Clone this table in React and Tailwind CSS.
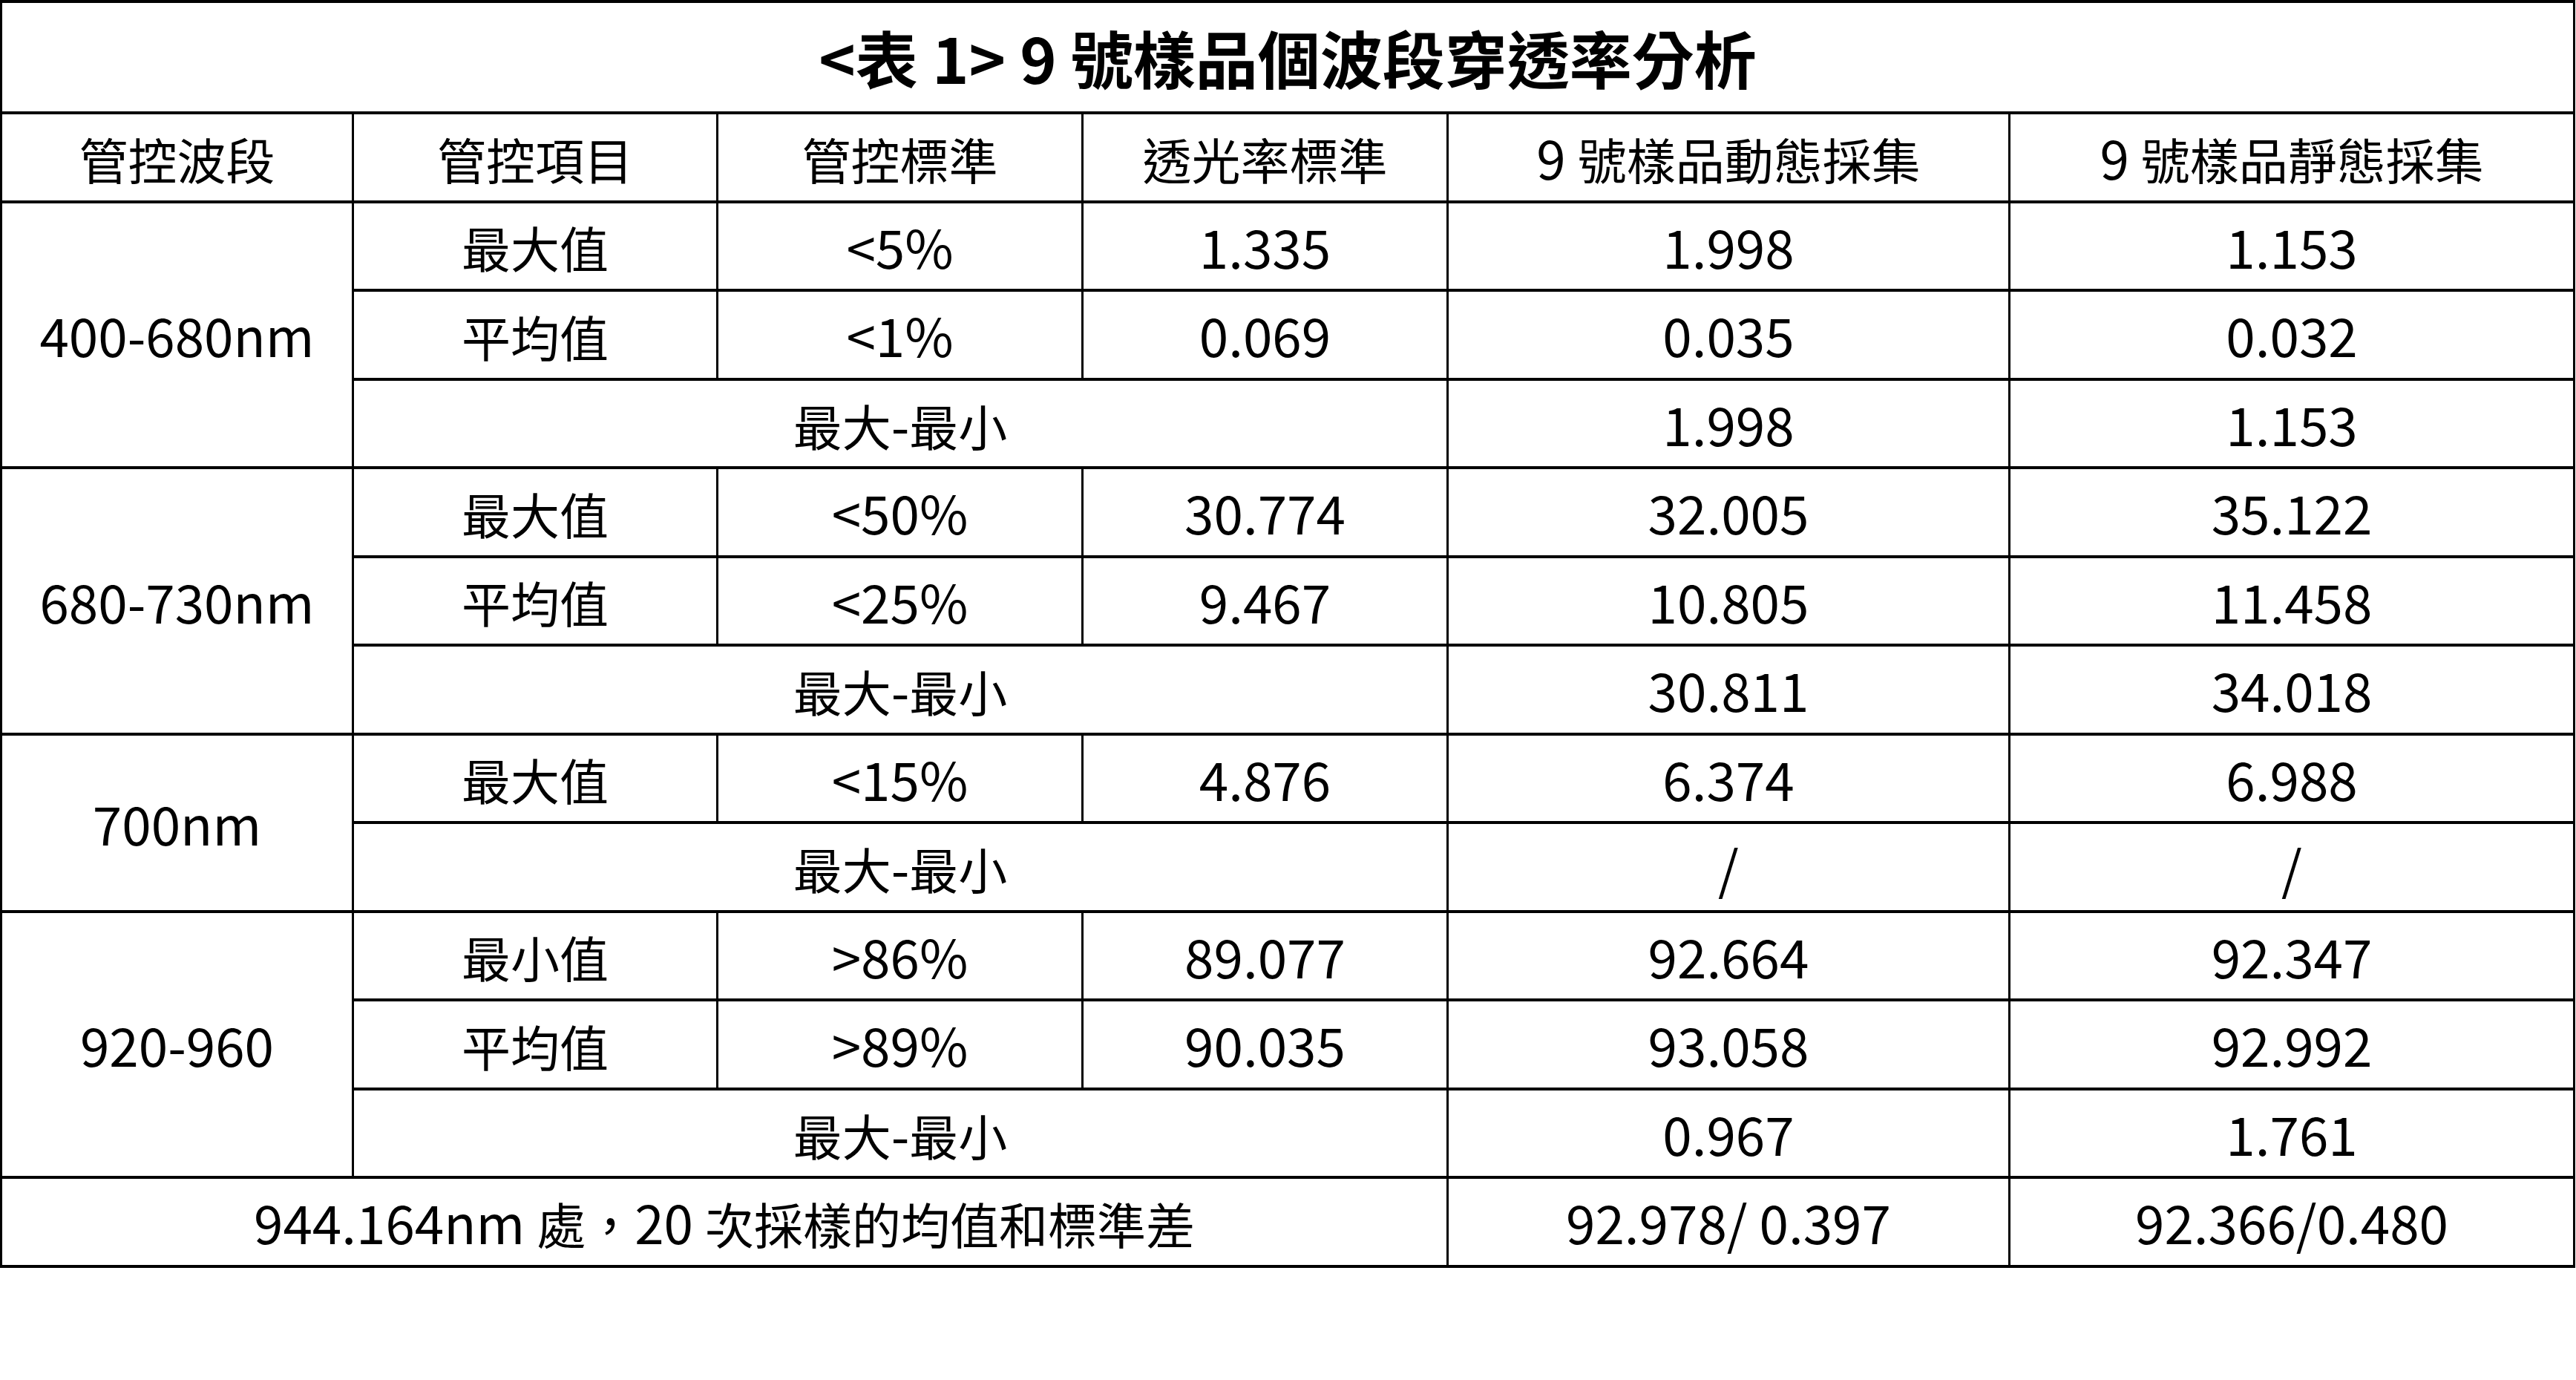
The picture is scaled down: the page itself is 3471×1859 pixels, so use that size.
import React from "react";

const F = { fontFamily: '"Noto Sans CJK TC", "Noto Sans CJK SC", sans-serif' };

function T({ s }) {
  const parts = s.split(/([\u3000-\u9fff\uff00-\uffef]+)/).filter((p) => p !== "");
  return (
    <>
      {parts.map((p, i) =>
        /[\u3000-\u9fff\uff00-\uffef]/.test(p) ? (
          <span key={i} className="text-[66px]">{p}</span>
        ) : (
          <span key={i} className="text-[71px]">{p}</span>
        )
      )}
    </>
  );
}

function C({ s, rs, cs }) {
  return (
    <td
      rowSpan={rs}
      colSpan={cs}
      className="border-x-[3px] border-y-4 border-black text-center align-middle p-0 whitespace-nowrap"
    >
      <T s={s} />
    </td>
  );
}

export default function App() {
  const rows = [
    [["400-680nm", 3], "最大值", "<5%", "1.335", "1.998", "1.153"],
    [null, "平均值", "<1%", "0.069", "0.035", "0.032"],
    [null, ["最大-最小"], "1.998", "1.153"],
    [["680-730nm", 3], "最大值", "<50%", "30.774", "32.005", "35.122"],
    [null, "平均值", "<25%", "9.467", "10.805", "11.458"],
    [null, ["最大-最小"], "30.811", "34.018"],
    [["700nm", 2], "最大值", "<15%", "4.876", "6.374", "6.988"],
    [null, ["最大-最小"], "/", "/"],
    [["920-960", 3], "最小值", ">86%", "89.077", "92.664", "92.347"],
    [null, "平均值", ">89%", "90.035", "93.058", "92.992"],
    [null, ["最大-最小"], "0.967", "1.761"],
  ];
  return (
    <div className="bg-white w-[3471px] h-[1859px]" style={F}>
      <table className="table-fixed border-collapse w-[3467px] text-black text-[70px] leading-none">
        <colgroup>
          <col className="w-[474px]" />
          <col className="w-[491px]" />
          <col className="w-[492px]" />
          <col className="w-[492px]" />
          <col className="w-[757px]" />
          <col className="w-[761px]" />
        </colgroup>
        <tbody>
          <tr className="h-[150px]">
            <td colSpan={6} className="border-x-[3px] border-y-4 border-black text-center align-middle font-bold text-[84px] p-0">
              &lt;表 1&gt; 9 號樣品個波段穿透率分析
            </td>
          </tr>
          <tr className="h-[119.5px]">
            <C s="管控波段" />
            <C s="管控項目" />
            <C s="管控標準" />
            <C s="透光率標準" />
            <C s="9 號樣品動態採集" />
            <C s="9 號樣品靜態採集" />
          </tr>
          {rows.map((r, i) => (
            <tr key={i} className="h-[119.5px]">
              {r[0] && <C rs={r[0][1]} s={r[0][0]} />}
              {Array.isArray(r[1]) ? (
                <>
                  <C cs={3} s={r[1][0]} />
                  <C s={r[2]} />
                  <C s={r[3]} />
                </>
              ) : (
                r.slice(1).map((v, j) => <C key={j} s={v} />)
              )}
            </tr>
          ))}
          <tr className="h-[119.5px]">
            <C cs={4} s="944.164nm 處，20 次採樣的均值和標準差" />
            <C s="92.978/ 0.397" />
            <C s="92.366/0.480" />
          </tr>
        </tbody>
      </table>
    </div>
  );
}
